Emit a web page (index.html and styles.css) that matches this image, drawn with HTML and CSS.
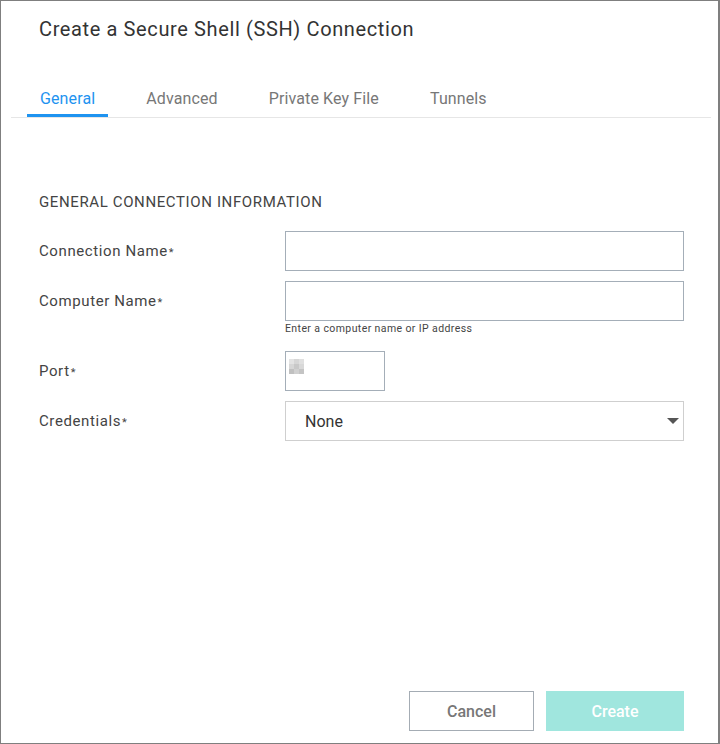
FILE: index.html
```html
<!DOCTYPE html>
<html lang="en">
<head>
<meta charset="utf-8">
<title>Create a Secure Shell (SSH) Connection</title>
<link rel="stylesheet" href="styles.css">
</head>
<body>
<div class="dialog">
  <h1 class="title">Create a Secure Shell (SSH) Connection</h1>
  <nav class="tabs">
    <span class="tab active">General</span>
    <span class="tab">Advanced</span>
    <span class="tab">Private Key File</span>
    <span class="tab">Tunnels</span>
  </nav>
  <main class="content">
    <h2 class="section">GENERAL CONNECTION INFORMATION</h2>
    <div class="row">
      <label class="label">Connection Name<span class="req">*</span></label>
      <div class="field"><div class="input"></div></div>
    </div>
    <div class="row">
      <label class="label">Computer Name<span class="req">*</span></label>
      <div class="field">
        <div class="input"></div>
        <div class="hint">Enter a computer name or IP address</div>
      </div>
    </div>
    <div class="row row-port">
      <label class="label">Port<span class="req">*</span></label>
      <div class="field">
        <div class="input port">
          <div class="blur">
            <i class="b1"></i><i class="b2"></i><i class="b3"></i>
            <i class="b4"></i><i class="b5"></i><i class="b6"></i>
            <i class="b7"></i><i class="b8"></i><i class="b9"></i>
          </div>
        </div>
      </div>
    </div>
    <div class="row">
      <label class="label">Credentials<span class="req">*</span></label>
      <div class="field">
        <div class="select">
          <span>None</span>
          <svg class="caret" width="12" height="6" viewBox="0 0 12 6"><path d="M0 0H12L6 6Z" fill="#555"/></svg>
        </div>
      </div>
    </div>
  </main>
  <footer class="footer">
    <button class="btn cancel">Cancel</button>
    <button class="btn create">Create</button>
  </footer>
</div>
</body>
</html>
```
FILE: styles.css
```css
* { box-sizing: border-box; }
html, body { margin: 0; padding: 0; background: #fff; }
body { font-family: Roboto, "Liberation Sans", sans-serif; }
.dialog {
  width: 720px;
  height: 744px;
  border: 1px solid #7f7f7f;
  border-right-width: 2px;
  display: flex;
  flex-direction: column;
  background: #fff;
}
.title {
  margin: 16px 0 0 38px;
  font-size: 20px;
  line-height: 24px;
  font-weight: 400;
  letter-spacing: 0.62px;
  color: #333;
}
.tabs {
  margin: 48px 7px 0 10px;
  padding-left: 16px;
  display: flex;
  gap: 25px;
  border-bottom: 1px solid #e6e6e6;
}
.tab {
  padding: 0 13px 5px;
  font-size: 16px;
  line-height: 20px;
  letter-spacing: 0.12px;
  color: #777;
  border-bottom: 3px solid transparent;
}
.tab.active { color: #1e93f0; border-bottom-color: #1e93f0; }
.content {
  flex: 1;
  padding: 74px 34px 0 38px;
}
.section {
  margin: 0 0 19px;
  font-size: 15px;
  line-height: 20px;
  font-weight: 400;
  letter-spacing: 0.62px;
  color: #444;
}
.row { display: flex; align-items: flex-start; margin-bottom: 10px; }
.label {
  width: 246px;
  height: 40px;
  display: flex;
  align-items: center;
  font-size: 15px;
  letter-spacing: 0.6px;
  color: #444;
}
.req { font-size: 11px; margin-left: 1px; position: relative; top: 1px; }
.field { flex: 1; }
.input {
  height: 40px;
  border: 1px solid #a4aeb8;
  background: #fff;
}
.input.port { width: 100px; padding: 7px 0 0 3px; }
.row-port { margin-top: 16px; }
.hint {
  margin-top: 1px;
  font-size: 10.5px;
  line-height: 13px;
  letter-spacing: 0.4px;
  color: #444;
}
.blur { display: grid; grid-template-columns: repeat(3, 5px); grid-template-rows: repeat(3, 5px); }
.blur i { display: block; width: 5px; height: 5px; }
.b1 { background: #e3e3e3; } .b2 { background: #d6d6d6; } .b3 { background: #e0e0e0; }
.b4 { background: #d6d6d6; } .b5 { background: #c8c8c8; } .b6 { background: #d8d8d8; }
.b7 { background: #c0c0c0; } .b8 { background: #d0d0d0; } .b9 { background: #c4c4c4; }
.select {
  height: 40px;
  border: 1px solid #cfcfcf;
  display: flex;
  align-items: center;
  justify-content: space-between;
  padding: 0 4px 0 19px;
  font-size: 16px;
  color: #333;
}
.footer {
  display: flex;
  justify-content: flex-end;
  gap: 12px;
  padding: 0 34px 12px 0;
}
.btn {
  height: 40px;
  font-family: Roboto, "Liberation Sans", sans-serif;
  font-size: 16px;
  font-weight: 500;
  border-radius: 0;
}
.cancel { width: 125px; background: #fff; border: 1px solid #a4acb4; color: #777; }
.create { width: 138px; background: #a0e6de; border: 0; color: #fff; }
```
